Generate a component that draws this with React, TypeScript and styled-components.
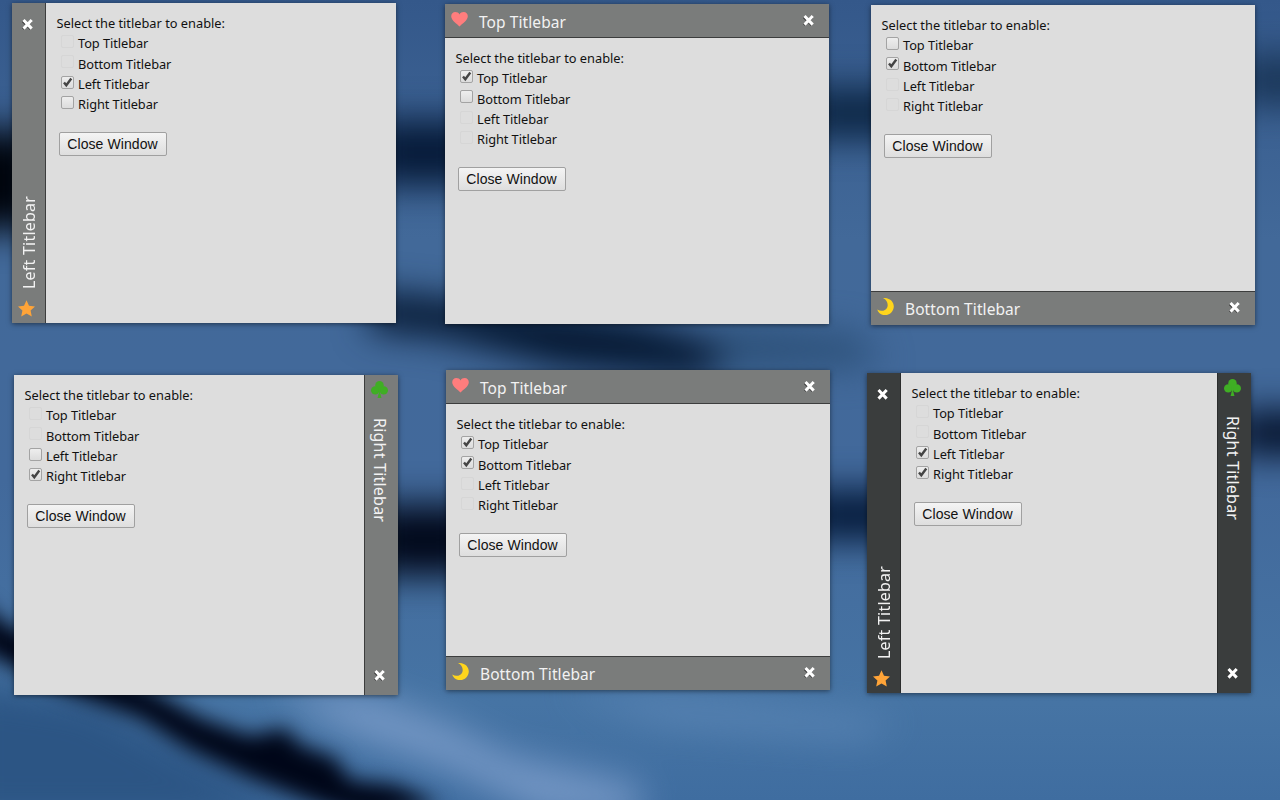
import React from 'react';
import styled, { createGlobalStyle } from 'styled-components';

const Global = createGlobalStyle`
  body { margin: 0; overflow: hidden; background: #40669a; }
  * { box-sizing: border-box; }
`;

type Side = 'top' | 'bottom' | 'left' | 'right';

const Desktop = styled.main`
  position: relative;
  width: 1280px;
  height: 800px;
  overflow: hidden;
  font-family: 'Noto Sans', sans-serif;
`;
const Wallpaper = styled.svg`
  position: absolute;
  inset: 0;
`;
const Window = styled.section<{ $x: number; $y: number }>`
  position: absolute;
  left: ${p => p.$x}px;
  top: ${p => p.$y}px;
  width: 384px;
  height: 320px;
  display: grid;
  grid-template: 'top top top' auto 'left body right' 1fr 'bottom bottom bottom' auto / auto 1fr auto;
  background: #dddddd;
  box-shadow: 0 1px 5px rgba(0, 0, 0, 0.5);
`;
const isVertical = (s: Side) => s === 'left' || s === 'right';
const inner = { top: 'bottom', bottom: 'top', left: 'right', right: 'left' };
const barPadding = { top: '0 14.5px 0 6px', bottom: '0 14.5px 2px 6px', left: '15px 0 6px', right: '6px 0 13.5px' };

const Bar = styled.header<{ $side: Side; $focused?: boolean }>`
  grid-area: ${p => p.$side};
  display: flex;
  align-items: center;
  flex-direction: ${p => (p.$side === 'left' ? 'column-reverse' : p.$side === 'right' ? 'column' : 'row')};
  ${p => (isVertical(p.$side) ? 'width: 34px;' : 'height: 34px;')}
  padding: ${p => barPadding[p.$side]};
  background: ${p => (p.$focused ? '#3a3d3d' : '#7a7c7b')};
  border-${p => inner[p.$side]}: 1px solid ${p => (p.$focused ? '#2b2d2d' : '#3c3d3d')};
`;
const Title = styled.span<{ $side: Side }>`
  flex: 1;
  color: #f2f2f2;
  font-size: 15.5px;
  line-height: 20px;
  white-space: nowrap;
  ${p => isVertical(p.$side) && 'font-size: 16px; writing-mode: vertical-rl; letter-spacing: 0.22px;'}
  ${p => p.$side === 'left' && 'transform: rotate(180deg); margin: 0 0 11px 1px;'}
  ${p => p.$side === 'right' && 'margin: 20px 3px 0 0;'}
  ${p => !isVertical(p.$side) && 'margin: 3px 0 0 11px; letter-spacing: 0.08px;'}
`;
const Emblem = styled.svg<{ $side: Side }>`
  width: 17px;
  height: 17px;
  flex: none;
  ${p => !isVertical(p.$side) && 'margin-bottom: 3px;'}
  ${p => p.$side === 'left' && 'margin-right: 4px;'}
  ${p => p.$side === 'right' && 'margin-right: 5px;'}
`;
const CloseMark = styled.svg<{ $side: Side }>`
  width: 13px;
  height: 13px;
  flex: none;
  ${p => !isVertical(p.$side) && 'margin-bottom: 1px;'}
  ${p => p.$side === 'left' && 'margin-right: 3px;'}
  ${p => p.$side === 'right' && 'margin-right: 4px;'}
`;
const Content = styled.div`
  grid-area: body;
  padding: 10px 0 0 10.5px;
  color: #111;
  font-size: 12.8px;
  line-height: 20.3px;
  white-space: nowrap;
`;
const Prompt = styled.div``;
const Option = styled.label`
  display: flex;
  align-items: center;
  height: 20.3px;
  padding-left: 4.4px;
  letter-spacing: -0.06px;
`;
const Box = styled.span<{ $disabled: boolean }>`
  width: 13px;
  height: 13px;
  margin: 0 4.1px 4px 0;
  border: 1px solid ${p => (p.$disabled ? '#d6d6d6' : '#a3a3a3')};
  border-radius: 2px;
  background: ${p => (p.$disabled ? '#dddddd' : 'linear-gradient(#eeeeee, #dcdcdc)')};
  svg { display: block; width: 11px; height: 11px; overflow: visible; }
`;
const CloseButton = styled.button`
  display: block;
  width: 108px;
  height: 24px;
  margin: 17.5px 0 0 2px;
  padding: 0;
  border: 1px solid #a0a0a0;
  border-radius: 2px;
  background: linear-gradient(#f4f4f4, #dedede);
  color: #111;
  font: 14px/20px 'Liberation Sans', Arial, sans-serif;
  letter-spacing: 0.08px;
`;

const emblems: Record<Side, React.ReactNode> = {
  top: <path fill="#ff7d7d" d="M8.5 15.5C6 12.7 0.2 9.5 0.2 5.2C0.2 2.8 2 1 4.3 1C6.2 1 7.7 1.8 8.5 3.4C9.3 1.8 10.8 1 12.7 1C15 1 16.8 2.8 16.8 5.2C16.8 9.5 11 12.7 8.5 15.5Z" />,
  bottom: <path fill="#ffd51c" d="M6 0C13.5 -.4 17 4.4 16.8 8.8C16.4 14 12.4 17.2 8 17.2C4.2 17.2 1 14.8 .2 11.6C4.2 13.8 8.6 12.8 10.2 9.4C11.6 6.2 10 2 6 0Z" />,
  left: <path fill="#ffa438" d="M8.5 .3L11 5.8L17 6.5L12.6 10.5L13.8 16.5L8.5 13.6L3.2 16.5L4.4 10.5L0 6.5L6 5.8Z" />,
  right: (
    <g fill="#3fae24">
      <circle cx="8.5" cy="4.2" r="4.2" /><circle cx="4.2" cy="9.4" r="4.2" /><circle cx="12.8" cy="9.4" r="4.2" />
      <path d="M7 6h3l-.8 6l1.3 5.2h-4l1.3-5.2z" />
    </g>
  ),
};
const names: Record<Side, string> = { top: 'Top Titlebar', bottom: 'Bottom Titlebar', left: 'Left Titlebar', right: 'Right Titlebar' };
const sides: Side[] = ['top', 'bottom', 'left', 'right'];

const Titlebar = ({ side, focused }: { side: Side; focused?: boolean }) => (
  <Bar $side={side} $focused={focused}>
    <Emblem $side={side} viewBox="0 0 17 17">{emblems[side]}</Emblem>
    <Title $side={side}>{names[side]}</Title>
    <CloseMark $side={side} viewBox="0 0 13 13" fill="none" strokeWidth="3">
      <path d="M2 3l8 8M10 3l-8 8" stroke="#333" />
      <path d="M2.5 2l8.2 8.6M10.7 2l-8.2 8.6" stroke="#fff" />
    </CloseMark>
  </Bar>
);

interface Frame { x: number; y: number; on: Side[]; focused?: boolean }
const frames: Frame[] = [
  { x: 12, y: 3, on: ['left'] },
  { x: 445, y: 4, on: ['top'] },
  { x: 871, y: 5, on: ['bottom'] },
  { x: 14, y: 375, on: ['right'] },
  { x: 446, y: 370, on: ['top', 'bottom'] },
  { x: 867, y: 373, on: ['left', 'right'], focused: true },
];

const DemoWindow = ({ x, y, on, focused }: Frame) => (
  <Window $x={x} $y={y}>
    {on.map(s => <Titlebar key={s} side={s} focused={focused} />)}
    <Content>
      <Prompt>Select the titlebar to enable:</Prompt>
      {sides.map(s => (
        <Option key={s}>
          <Box $disabled={isVertical(s) !== isVertical(on[0])}>
            {on.includes(s) && (
              <svg viewBox="0 0 11 11"><path d="M2 5.5L4.3 8.3L9.3 1.5" fill="none" stroke="#444" strokeWidth="2.4" /></svg>
            )}
          </Box>
          {names[s]}
        </Option>
      ))}
      <CloseButton>Close Window</CloseButton>
    </Content>
  </Window>
);

const App = () => (
  <Desktop>
    <Global />
    <Wallpaper width="1280" height="800" viewBox="0 0 1280 800">
      <defs>
        <linearGradient id="sky" x1="0" y1="0" x2="0" y2="1">
          <stop offset="0" stopColor="#34588a" />
          <stop offset=".3" stopColor="#426999" />
          <stop offset=".6" stopColor="#42699b" />
          <stop offset=".88" stopColor="#4674a4" />
          <stop offset="1" stopColor="#3f6da0" />
        </linearGradient>
        <filter id="soft" x="-50%" y="-50%" width="200%" height="200%" colorInterpolationFilters="sRGB"><feGaussianBlur stdDeviation="18" /></filter>
        <filter id="tight" x="-50%" y="-50%" width="200%" height="200%" colorInterpolationFilters="sRGB"><feGaussianBlur stdDeviation="10" /></filter>
      </defs>
      <rect width="1280" height="800" fill="url(#sky)" />
      <g filter="url(#soft)">
        <rect x="-60" y="130" width="100" height="100" fill="#00040c" />
        <rect x="370" y="120" width="110" height="65" fill="#061a38" />
        <rect x="800" y="88" width="110" height="50" fill="#0c2644" />
        <rect x="1235" y="55" width="90" height="50" fill="#1a3658" />
        <path d="M370 292L500 305L640 322L740 350L700 378L560 366L440 336L370 330Z" fill="#03152e" />
        <path d="M720 325L860 335L880 365L720 370Z" fill="#2c5078" />
        <rect x="370" y="505" width="110" height="70" fill="#01081a" />
        <rect x="800" y="490" width="110" height="50" fill="#051a3a" />
        <rect x="1235" y="412" width="90" height="42" fill="#020e26" />
        <path d="M-40 680L90 700L220 770L300 820H-40Z" fill="#2c5584" />
      </g>
      <g filter="url(#soft)" opacity=".85">
        <path d="M270 690L370 695L440 720L510 755L640 785V820L540 815L450 770L350 735Z" fill="#7c9dca" />
        <path d="M560 690L720 700L900 720L860 740L660 725Z" fill="#5b86b6" />
      </g>
      <g filter="url(#tight)">
        <path d="M-20 600L0 620L70 660L150 690L200 718L250 736L285 728L300 745L335 758L350 780L395 785L440 805L370 820L320 805L250 778L190 750L140 718L60 690L-20 650Z" fill="#000618" />
      </g>
    </Wallpaper>
    {frames.map(f => <DemoWindow key={`${f.x}-${f.y}`} {...f} />)}
  </Desktop>
);

export default App;
